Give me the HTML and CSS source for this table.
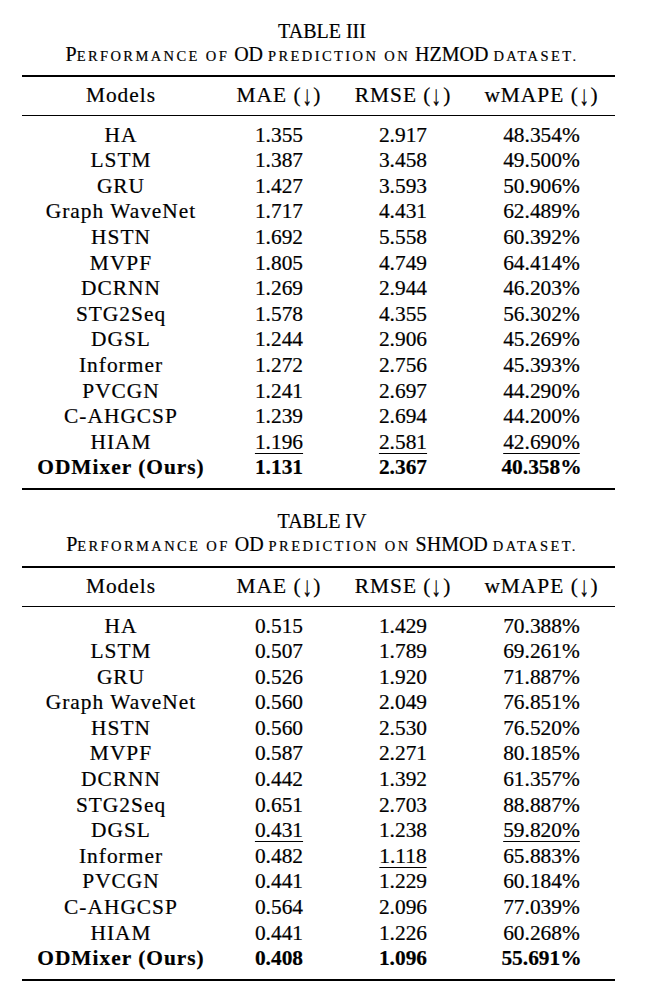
FILE: index.html
```html
<!DOCTYPE html>
<html lang="en">
<head>
<meta charset="utf-8">
<title>OD prediction tables</title>
<link rel="stylesheet" href="styles.css">
</head>
<body>
<main class="page">
  <section class="block">
    <div class="caption">
      <div class="label">TABLE III</div>
      <div class="title">P<span class="sc">erformance of</span> OD <span class="sc">prediction on</span> HZMOD <span class="sc">dataset.</span></div>
    </div>
    <table class="results">
      <colgroup><col class="c-model"><col class="c-mae"><col class="c-rmse"><col class="c-wmape"></colgroup>
      <thead>
        <tr><th>Models</th><th>MAE (<span class="arrow">↓</span>)</th><th>RMSE (<span class="arrow">↓</span>)</th><th>wMAPE (<span class="arrow">↓</span>)</th></tr>
      </thead>
      <tbody>
        <tr><td>HA</td><td>1.355</td><td>2.917</td><td>48.354%</td></tr>
        <tr><td>LSTM</td><td>1.387</td><td>3.458</td><td>49.500%</td></tr>
        <tr><td>GRU</td><td>1.427</td><td>3.593</td><td>50.906%</td></tr>
        <tr><td>Graph WaveNet</td><td>1.717</td><td>4.431</td><td>62.489%</td></tr>
        <tr><td>HSTN</td><td>1.692</td><td>5.558</td><td>60.392%</td></tr>
        <tr><td>MVPF</td><td>1.805</td><td>4.749</td><td>64.414%</td></tr>
        <tr><td>DCRNN</td><td>1.269</td><td>2.944</td><td>46.203%</td></tr>
        <tr><td>STG2Seq</td><td>1.578</td><td>4.355</td><td>56.302%</td></tr>
        <tr><td>DGSL</td><td>1.244</td><td>2.906</td><td>45.269%</td></tr>
        <tr><td>Informer</td><td>1.272</td><td>2.756</td><td>45.393%</td></tr>
        <tr><td>PVCGN</td><td>1.241</td><td>2.697</td><td>44.290%</td></tr>
        <tr><td>C-AHGCSP</td><td>1.239</td><td>2.694</td><td>44.200%</td></tr>
        <tr><td>HIAM</td><td><span class="u">1.196</span></td><td><span class="u">2.581</span></td><td><span class="u">42.690%</span></td></tr>
        <tr class="best"><td>ODMixer (Ours)</td><td>1.131</td><td>2.367</td><td>40.358%</td></tr>
      </tbody>
    </table>
  </section>

  <section class="block">
    <div class="caption">
      <div class="label">TABLE IV</div>
      <div class="title">P<span class="sc">erformance of</span> OD <span class="sc">prediction on</span> SHMOD <span class="sc">dataset.</span></div>
    </div>
    <table class="results">
      <colgroup><col class="c-model"><col class="c-mae"><col class="c-rmse"><col class="c-wmape"></colgroup>
      <thead>
        <tr><th>Models</th><th>MAE (<span class="arrow">↓</span>)</th><th>RMSE (<span class="arrow">↓</span>)</th><th>wMAPE (<span class="arrow">↓</span>)</th></tr>
      </thead>
      <tbody>
        <tr><td>HA</td><td>0.515</td><td>1.429</td><td>70.388%</td></tr>
        <tr><td>LSTM</td><td>0.507</td><td>1.789</td><td>69.261%</td></tr>
        <tr><td>GRU</td><td>0.526</td><td>1.920</td><td>71.887%</td></tr>
        <tr><td>Graph WaveNet</td><td>0.560</td><td>2.049</td><td>76.851%</td></tr>
        <tr><td>HSTN</td><td>0.560</td><td>2.530</td><td>76.520%</td></tr>
        <tr><td>MVPF</td><td>0.587</td><td>2.271</td><td>80.185%</td></tr>
        <tr><td>DCRNN</td><td>0.442</td><td>1.392</td><td>61.357%</td></tr>
        <tr><td>STG2Seq</td><td>0.651</td><td>2.703</td><td>88.887%</td></tr>
        <tr><td>DGSL</td><td><span class="u">0.431</span></td><td>1.238</td><td><span class="u">59.820%</span></td></tr>
        <tr><td>Informer</td><td>0.482</td><td><span class="u">1.118</span></td><td>65.883%</td></tr>
        <tr><td>PVCGN</td><td>0.441</td><td>1.229</td><td>60.184%</td></tr>
        <tr><td>C-AHGCSP</td><td>0.564</td><td>2.096</td><td>77.039%</td></tr>
        <tr><td>HIAM</td><td>0.441</td><td>1.226</td><td>60.268%</td></tr>
        <tr class="best"><td>ODMixer (Ours)</td><td>0.408</td><td>1.096</td><td>55.691%</td></tr>
      </tbody>
    </table>
  </section>
</main>
</body>
</html>
```

FILE: styles.css
```css
html, body {
  margin: 0;
  padding: 0;
  background: #ffffff;
}

body {
  font-family: "Liberation Serif", "Times New Roman", serif;
  color: #000000;
}

.page {
  padding: 19.5px 0 0 22px;
  -webkit-text-stroke: 0.2px #000;
}

.block + .block {
  margin-top: 20.5px;
}

.caption {
  width: 600px;
  text-align: center;
  font-family: "Liberation Serif", "Times New Roman", serif;
  font-size: 20px;
  line-height: 23px;
  margin-bottom: 9.5px;
}

.sc {
  text-transform: uppercase;
  font-size: 14.5px;
  line-height: 1;
  letter-spacing: 2.4px;
}

.results {
  border-collapse: separate;
  border-spacing: 0;
  table-layout: fixed;
  width: 593px;
  font-family: "Liberation Serif", "Times New Roman", serif;
  font-size: 21.4px;
  line-height: 25.6px;
}

.c-model { width: 198px; }
.c-mae { width: 118px; }
.c-rmse { width: 130px; }
.c-wmape { width: 147px; }

.results th,
.results td {
  padding: 0;
  text-align: center;
  font-family: "Liberation Serif", "Times New Roman", serif;
  font-weight: normal;
  white-space: nowrap;
}

.results th,
.results td:first-child {
  letter-spacing: 1px;
}

.arrow {
  display: inline-block;
  line-height: 1;
  transform: translateY(1px) scale(0.9, 1.3);
}

.results thead th {
  border-top: 2px solid #000;
  border-bottom: 1px solid #000;
  padding: 6px 0;
}

.results tbody tr:first-child td {
  padding-top: 7px;
}

.results tbody tr:last-child td {
  padding-bottom: 7px;
  border-bottom: 2px solid #000;
}

.results .best td {
  font-weight: bold;
}

.u {
  text-decoration: underline;
  text-decoration-thickness: 1px;
  text-underline-offset: 4px;
}
```
